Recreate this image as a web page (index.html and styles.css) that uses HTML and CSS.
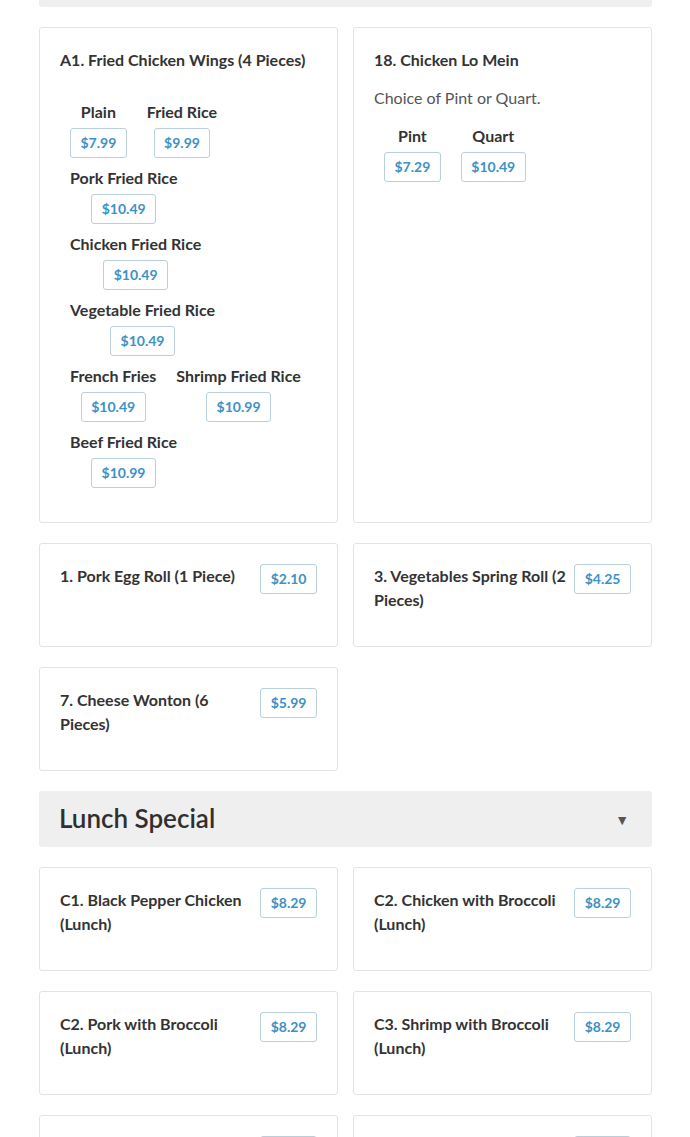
FILE: index.html
```html
<!DOCTYPE html>
<html lang="en">
<head>
<meta charset="utf-8">
<title>Menu</title>
<link rel="stylesheet" href="styles.css">
</head>
<body>
<div class="page">
  <section class="category">
    <div class="cat-header"><h2 class="cat-title">Appetizers</h2><span class="cat-arrow">&#9660;</span></div>
    <div class="grid">
      <div class="card">
        <div class="card-head"><h3 class="item-title">A1. Fried Chicken Wings (4 Pieces)</h3></div>
        <p class="item-desc"></p>
        <div class="options">
          <div class="opt"><span class="opt-label">Plain</span><span class="price">$7.99</span></div>
          <div class="opt"><span class="opt-label">Fried Rice</span><span class="price">$9.99</span></div>
          <div class="opt"><span class="opt-label">Pork Fried Rice</span><span class="price">$10.49</span></div>
          <div class="opt"><span class="opt-label">Chicken Fried Rice</span><span class="price">$10.49</span></div>
          <div class="opt"><span class="opt-label">Vegetable Fried Rice</span><span class="price">$10.49</span></div>
          <div class="opt"><span class="opt-label">French Fries</span><span class="price">$10.49</span></div>
          <div class="opt"><span class="opt-label">Shrimp Fried Rice</span><span class="price">$10.99</span></div>
          <div class="opt"><span class="opt-label">Beef Fried Rice</span><span class="price">$10.99</span></div>
        </div>
      </div>
      <div class="card">
        <div class="card-head"><h3 class="item-title">18. Chicken Lo Mein</h3></div>
        <p class="item-desc">Choice of Pint or Quart.</p>
        <div class="options">
          <div class="opt"><span class="opt-label">Pint</span><span class="price">$7.29</span></div>
          <div class="opt"><span class="opt-label">Quart</span><span class="price">$10.49</span></div>
        </div>
      </div>
      <div class="card">
        <div class="card-head"><h3 class="item-title">1. Pork Egg Roll (1 Piece)</h3><span class="price">$2.10</span></div>
      </div>
      <div class="card">
        <div class="card-head"><h3 class="item-title">3. Vegetables Spring Roll (2 Pieces)</h3><span class="price">$4.25</span></div>
      </div>
      <div class="card">
        <div class="card-head"><h3 class="item-title">7. Cheese Wonton (6 Pieces)</h3><span class="price">$5.99</span></div>
      </div>
    </div>
  </section>

  <section class="category">
    <div class="cat-header"><h2 class="cat-title">Lunch Special</h2><span class="cat-arrow">&#9660;</span></div>
    <div class="grid">
      <div class="card">
        <div class="card-head"><h3 class="item-title">C1. Black Pepper Chicken (Lunch)</h3><span class="price">$8.29</span></div>
      </div>
      <div class="card">
        <div class="card-head"><h3 class="item-title">C2. Chicken with Broccoli (Lunch)</h3><span class="price">$8.29</span></div>
      </div>
      <div class="card">
        <div class="card-head"><h3 class="item-title">C2. Pork with Broccoli (Lunch)</h3><span class="price">$8.29</span></div>
      </div>
      <div class="card">
        <div class="card-head"><h3 class="item-title">C3. Shrimp with Broccoli (Lunch)</h3><span class="price">$8.29</span></div>
      </div>
      <div class="card">
        <div class="card-head"><h3 class="item-title">C4. Beef with Broccoli (Lunch)</h3><span class="price">$8.29</span></div>
      </div>
      <div class="card">
        <div class="card-head"><h3 class="item-title">C5. Sweet &amp; Sour Chicken (Lunch)</h3><span class="price">$8.29</span></div>
      </div>
    </div>
  </section>
</div>
</body>
</html>
```

FILE: styles.css
```css
html, body {
  margin: 0;
  padding: 0;
  background: #fff;
}
body {
  font-family: Lato, "Open Sans", "Liberation Sans", sans-serif;
  color: #333;
  font-size: 16px;
}
.page {
  padding: 0 38px 0 39px;
  margin-top: -49px;
}
.category {
  margin-bottom: 20px;
}
.cat-header {
  height: 56px;
  box-sizing: border-box;
  background: #efefef;
  border-radius: 3px;
  display: flex;
  align-items: center;
  justify-content: space-between;
  padding: 0 23px 3px 20px;
  margin-bottom: 20px;
}
.cat-title {
  margin: 0;
  font-size: 26px;
  font-weight: 600;
  color: #2f2f2f;
  line-height: 30px;
}
.cat-arrow {
  font-size: 14px;
  color: #555;
  padding-top: 4px;
}
.grid {
  display: grid;
  grid-template-columns: 1fr 1fr;
  gap: 20px 15px;
}
.card {
  border: 1px solid #e3e3e3;
  border-radius: 3px;
  padding: 20px;
  background: #fff;
}
.card-head {
  display: flex;
  align-items: flex-start;
  gap: 8px;
  margin-bottom: 14px;
}
.item-title {
  flex: 1;
  margin: 0;
  font-size: 16px;
  font-weight: 700;
  line-height: 24px;
  color: #333;
}
.item-desc {
  margin: 0;
  padding-bottom: 14px;
  font-size: 16px;
  line-height: 24px;
  color: #555;
}
.options {
  display: flex;
  flex-wrap: wrap;
  column-gap: 20px;
  padding: 0 10px 6px;
}
.opt {
  display: flex;
  flex-direction: column;
  align-items: center;
  margin-bottom: 8px;
}
.opt-label {
  font-weight: 700;
  font-size: 16px;
  line-height: 24px;
  margin-bottom: 4px;
  color: #333;
}
.price {
  display: inline-block;
  height: 30px;
  box-sizing: border-box;
  line-height: 28px;
  padding: 0 9.5px;
  border: 1px solid #b9cfdc;
  border-radius: 3px;
  font-size: 14px;
  font-weight: 700;
  color: #3c92c6;
  background: #fff;
  white-space: nowrap;
}
```
